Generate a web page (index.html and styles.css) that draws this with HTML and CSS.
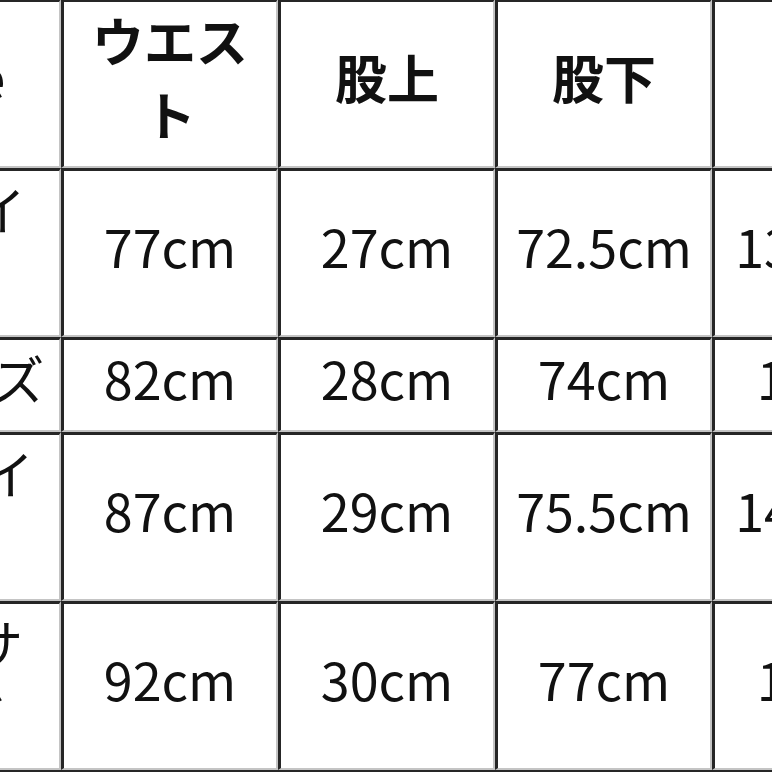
FILE: index.html
```html
<!DOCTYPE html>
<html lang="ja">
<head>
<meta charset="utf-8">
<title>サイズ表</title>
<link rel="stylesheet" href="styles.css">
</head>
<body>
<div class="frame">
  <table class="size-table">
    <colgroup>
      <col class="c-std">
      <col class="c-std">
      <col class="c-std">
      <col class="c-std">
      <col class="c-last">
    </colgroup>
    <thead>
      <tr>
        <th>Size</th>
        <th>ウエスト</th>
        <th>股上</th>
        <th>股下</th>
        <th>総丈</th>
      </tr>
    </thead>
    <tbody>
      <tr>
        <td>Mサイズ</td>
        <td>77cm</td>
        <td>27cm</td>
        <td>72.5cm</td>
        <td>134.5cm</td>
      </tr>
      <tr>
        <td>Lサイズ</td>
        <td>82cm</td>
        <td>28cm</td>
        <td>74cm</td>
        <td>138cm</td>
      </tr>
      <tr>
        <td>XLサイズ</td>
        <td>87cm</td>
        <td>29cm</td>
        <td>75.5cm</td>
        <td>142.5cm</td>
      </tr>
      <tr>
        <td>XXLサイズ</td>
        <td>92cm</td>
        <td>30cm</td>
        <td>77cm</td>
        <td>146cm</td>
      </tr>
    </tbody>
  </table>
</div>
</body>
</html>
```

FILE: styles.css
```css
html, body {
  margin: 0;
  padding: 0;
  background: #ffffff;
}

.frame {
  width: 772px;
  height: 772px;
  overflow: hidden;
  background: #ffffff;
}

.size-table {
  table-layout: fixed;
  border-collapse: separate;
  border-spacing: 0;
  width: 1118px;
  margin-left: -156px;
  margin-top: -1px;
  border-bottom: 3px solid #262626;
  font-family: "Noto Sans CJK JP", "Noto Sans", sans-serif;
  font-size: 52px;
  line-height: 74px;
  color: #111111;
}

.c-std { width: 217px; }
.c-last { width: 250px; }

.size-table th,
.size-table td {
  border-top: 3px solid #262626;
  border-left: 3px solid #262626;
  border-right: 2px solid #c4c4c4;
  border-bottom: 2px solid #c4c4c4;
  padding: 1px 13px 15px;
  text-align: center;
  vertical-align: middle;
  background: #ffffff;
}

.size-table th {
  font-weight: 700;
}

.size-table td {
  font-weight: 400;
}
```
